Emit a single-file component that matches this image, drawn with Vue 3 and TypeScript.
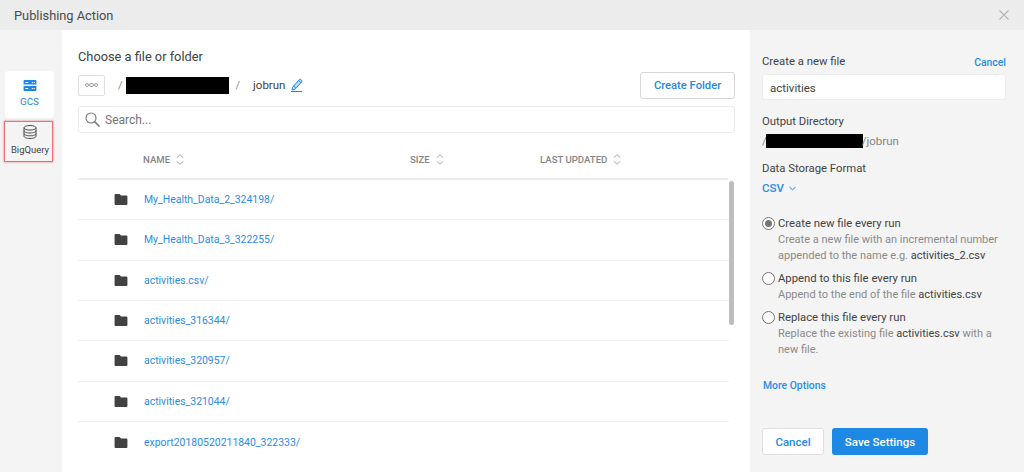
<script setup lang="ts">
const rows: string[] = [
  'My_Health_Data_2_324198/',
  'My_Health_Data_3_322255/',
  'activities.csv/',
  'activities_316344/',
  'activities_320957/',
  'activities_321044/',
  'export20180520211840_322333/',
]
const cols = [
  { label: 'NAME', cls: 'c-name' },
  { label: 'SIZE', cls: 'c-size' },
  { label: 'LAST UPDATED', cls: 'c-date' },
]
</script>

<template>
  <div class="modal">
    <header class="head">
      <span class="head-title">Publishing Action</span>
      <svg class="close" width="10" height="10" viewBox="0 0 10 10"><path d="M.5.5l9 9M9.500.5l-9 9" stroke="#b5b5b5" stroke-width="1.100" fill="none" /></svg>
    </header>
    <div class="body">
      <nav class="rail">
        <div class="tab active">
          <svg width="14" height="11" viewBox="0 0 14 12">
            <path fill="#1e88e5" d="M0 1a1 1 0 0 1 1-1h12a1 1 0 0 1 1 1v4H0zM0 6.500h14V11a1 1 0 0 1-1 1H1a1 1 0 0 1-1-1z" />
            <path fill="#fff" d="M2 2.300h3v1H2zM9 2.300h1.200v1H9zM11 2.300h1.200v1H11zM2 8.800h3v1H2zM9 8.800h1.200v1H9zM11 8.800h1.200v1H11z" />
          </svg>
          <span>GCS</span>
        </div>
        <div class="tab flagged">
          <svg width="14" height="14" viewBox="0 0 14 14" fill="none" stroke="#4a4a4a" stroke-width="1">
            <ellipse cx="7" cy="2.800" rx="6" ry="2.300" />
            <path d="M1 2.800v8.400c0 1.300 2.700 2.300 6 2.300s6-1 6-2.300V2.800M1 5.700c0 1.300 2.700 2.300 6 2.300s6-1 6-2.300M1 8.500c0 1.300 2.700 2.300 6 2.300s6-1 6-2.300" />
          </svg>
          <span>BigQuery</span>
        </div>
      </nav>

      <main class="main">
        <h2 class="title">Choose a file or folder</h2>
        <div class="crumbs">
          <span class="more"><i></i><i></i><i></i></span>
          <span class="sep first">/</span>
          <span class="redact bucket"></span>
          <span class="sep">/</span>
          <span class="folder">jobrun</span>
          <svg class="pencil" width="12" height="14" viewBox="0 0 12 14" fill="none" stroke="#1e88e5" stroke-width="1">
            <path fill="#bbdefb" d="M1.500 9.300L8.300 1.500a1 1 0 0 1 1.400-.1l1 .9a1 1 0 0 1 .1 1.400L4 11.300l-3 .6zM7.500 2.500l2.400 2.100M2.600 8l2.300 2.100" />
            <path d="M0 13.500h11" stroke-width="1.100" />
          </svg>
          <button class="btn create">Create Folder</button>
        </div>
        <div class="search">
          <svg width="15" height="15" viewBox="0 0 15 15" fill="none" stroke="#757575" stroke-width="1.100">
            <circle cx="6" cy="6" r="5" />
            <path d="M9.700 9.700l4.800 4.800" stroke-width="1.500" />
          </svg>
          <span>Search...</span>
        </div>
        <div class="thead">
          <span v-for="c in cols" :key="c.label" class="th" :class="c.cls">
            {{ c.label }}
            <svg width="8" height="11" viewBox="0 0 8 11" fill="none" stroke="#a8a8a8" stroke-width="1"><path d="M.8 3.600L4 .8l3.200 2.800M.8 7.400L4 10.200l3.200-2.800" /></svg>
          </span>
        </div>
        <div class="tbody">
          <div v-for="r in rows" :key="r" class="row">
            <svg class="ficon" width="14" height="11" viewBox="0 0 14 12"><path fill="#424242" d="M1 0h4.500l1.500 1.700h6a1 1 0 0 1 1 1V11a1 1 0 0 1-1 1H1a1 1 0 0 1-1-1V1a1 1 0 0 1 1-1z" /></svg>
            <a class="link">{{ r }}</a>
          </div>
          <div class="scroll"></div>
        </div>
      </main>

      <aside class="side">
        <div class="side-top">
          <span class="label">Create a new file</span>
          <a class="cancel-link">Cancel</a>
        </div>
        <div class="input">activities</div>
        <div class="label out">Output Directory</div>
        <div class="path"><span>/</span><span class="redact dir"></span><span>/jobrun</span></div>
        <div class="label fmt">Data Storage Format</div>
        <div class="csv">CSV
          <svg width="7" height="5" viewBox="0 0 7 5" fill="none" stroke="#1e88e5" stroke-width="1"><path d="M.5 1l3 2.800L6.500 1" /></svg>
        </div>

        <div class="opt first-opt">
          <span class="radio on"></span>
          <div>
            <div class="opt-t">Create new file every run</div>
            <div class="opt-d">Create a new file with an incremental number appended to the name e.g. <b>activities_2.csv</b></div>
          </div>
        </div>
        <div class="opt">
          <span class="radio"></span>
          <div>
            <div class="opt-t">Append to this file every run</div>
            <div class="opt-d">Append to the end of the file <b>activities.csv</b></div>
          </div>
        </div>
        <div class="opt">
          <span class="radio"></span>
          <div>
            <div class="opt-t">Replace this file every run</div>
            <div class="opt-d">Replace the existing file <b>activities.csv</b> with a new file.</div>
          </div>
        </div>

        <a class="more-opt">More Options</a>
        <div class="actions">
          <button class="btn cancel">Cancel</button>
          <button class="btn save">Save Settings</button>
        </div>
      </aside>
    </div>
  </div>
</template>

<style>
html, body { margin: 0; overflow: hidden; }
</style>

<style scoped>
.modal {
  width: 1024px;
  height: 472px;
  display: flex;
  flex-direction: column;
  overflow: hidden;
  font-family: Roboto, "Liberation Sans", sans-serif;
  color: #424242;
  font-size: 12px;
  background: #f4f4f4;
}
.head {
  height: 30px;
  flex: none;
  background: #ececec;
  display: flex;
  align-items: center;
  justify-content: space-between;
  padding: 0 15px 0 14px;
  box-sizing: border-box;
}
.head-title { font-size: 12.800px; color: #4a4a4a; }
.body { flex: 1; display: flex; min-height: 0; }

.rail {
  width: 62px;
  flex: none;
  box-sizing: border-box;
  padding: 41px 0 0 5px;
  display: flex;
  flex-direction: column;
  align-items: flex-start;
}
.tab {
  width: 49px;
  display: flex;
  flex-direction: column;
  align-items: center;
  font-size: 9.800px;
  box-sizing: border-box;
}
.tab.active {
  height: 47px;
  padding-top: 9px;
  gap: 5px;
  background: #fff;
  border-radius: 4px;
  color: #1e88e5;
}
.tab.flagged {
  width: 49px;
  height: 41px;
  margin: 3px 0 0 -1px;
  padding: 3px 0 0 3px;
  gap: 5px;
  font-size: 9.500px;
  border: 1px solid #e57373;
  box-shadow: 0 0 2px #e57373;
}

.main {
  width: 688px;
  flex: none;
  background: #fff;
  box-sizing: border-box;
  padding: 19px 15px 0 16px;
  overflow: hidden;
}
.title { margin: 0; font-size: 12.800px; font-weight: 400; line-height: 16px; color: #424242; }
.crumbs { display: flex; align-items: center; height: 28px; margin-top: 6px; position: relative; }
.more {
  width: 27px; height: 21px; box-sizing: border-box;
  border: 1px solid #e0e0e0; border-radius: 2px;
  display: flex; align-items: center; justify-content: center; gap: 0;
}
.more i { width: 4.500px; height: 4.500px; box-sizing: border-box; border: 1px solid #a0a0a0; border-radius: 50%; }
.sep { color: #8a8a8a; font-size: 11px; margin: 0 14px 0 7px; }
.sep.first { margin: 0 3px 0 13px; }
.redact { background: #000; display: inline-block; }
.bucket { width: 103px; height: 17px; }
.folder { font-size: 11.500px; color: #424242; margin-right: 6px; margin-left: -1px; }
.pencil { margin-top: -1px; }
.btn {
  font-family: inherit;
  font-size: 11.500px;
  font-weight: 500;
  border-radius: 3px;
  box-sizing: border-box;
  padding: 0;
  background: #fff;
  color: #1e88e5;
}
.create { margin-left: auto; width: 95px; height: 27px; border: 1px solid #d6d6d6; font-size: 11.200px; }
.search {
  margin-top: 7px;
  height: 27px;
  box-sizing: border-box;
  border: 1px solid #ececec;
  border-radius: 3px;
  display: flex;
  align-items: center;
  padding-left: 6px;
  gap: 5px;
  color: #757575;
  font-size: 12px;
}
.thead {
  height: 47px;
  box-sizing: border-box;
  border-bottom: 2px solid #ececec;
  display: flex;
  align-items: center;
  padding-top: 8px;
  margin-right: 7px;
  font-size: 9.600px;
  font-weight: 500;
  color: #858585;
}
.th { display: inline-flex; align-items: center; gap: 6px; }
.c-name { margin-left: 65px; width: 267px; }
.c-size { width: 130px; }
.tbody { position: relative; height: 293px; }
.row {
  height: 40.330px;
  box-sizing: border-box;
  border-bottom: 1px solid #f1f1f1;
  display: flex;
  align-items: center;
  margin-right: 6px;
  padding-left: 36px;
}
.row:nth-child(7) { border-bottom: none; }
.ficon { margin-right: 16px; flex: none; }
.link { color: #2b8ce6; font-size: 10.450px; }
.scroll {
  position: absolute;
  right: 1px;
  top: 1px;
  width: 5px;
  height: 144px;
  border-radius: 3px;
  background: #bdbdbd;
}

.side {
  flex: 1;
  box-sizing: border-box;
  padding: 25px 18px 0 12px;
  display: flex;
  flex-direction: column;
}
.side-top { display: flex; justify-content: space-between; align-items: center; height: 14px; }
.label { font-size: 11.300px; color: #424242; line-height: 14px; }
.cancel-link { color: #2b8ce6; font-size: 10.400px; font-weight: 500; }
.input {
  margin-top: 5px;
  height: 26px;
  box-sizing: border-box;
  background: #fff;
  border: 1px solid #ececec;
  border-radius: 3px;
  padding: 1px 0 0 7px;
  display: flex;
  align-items: center;
  font-size: 11.500px;
}
.out { margin-top: 15px; }
.path { margin-top: 4px; height: 15px; display: flex; align-items: center; color: #858585; font-size: 11.500px; }
.dir { width: 97px; height: 14px; margin-left: -1px; margin-right: -1px; }
.fmt { margin-top: 14px; }
.csv { margin-top: 5px; color: #2b8ce6; font-size: 11.500px; font-weight: 500; line-height: 15px; display: flex; align-items: center; gap: 5px; }
.opt { display: flex; gap: 3px; margin-top: 7px; }
.first-opt { margin-top: 20px; }
.radio {
  width: 13px; height: 13px; flex: none;
  box-sizing: border-box;
  border: 1px solid #757575;
  border-radius: 50%;
  background: #fff;
  margin-top: 1px;
  position: relative;
}
.radio.on::after {
  content: '';
  position: absolute;
  inset: 2px;
  border-radius: 50%;
  background: #757575;
}
.opt-t { font-size: 11.300px; line-height: 16px; color: #424242; }
.opt-d { font-size: 11px; line-height: 16px; color: #8a8a8a; }
.opt-d b { font-weight: 400; color: #424242; }
.more-opt { margin: 21px 0 0 1px; font-size: 10.400px; font-weight: 500; color: #2b8ce6; line-height: 14px; }
.actions { display: flex; gap: 8px; margin-top: 35px; }
.cancel { width: 62px; height: 27px; border: 1px solid #e0e0e0; }
.save { width: 96px; height: 27px; border: none; background: #1e88e5; color: #fff; }
</style>
